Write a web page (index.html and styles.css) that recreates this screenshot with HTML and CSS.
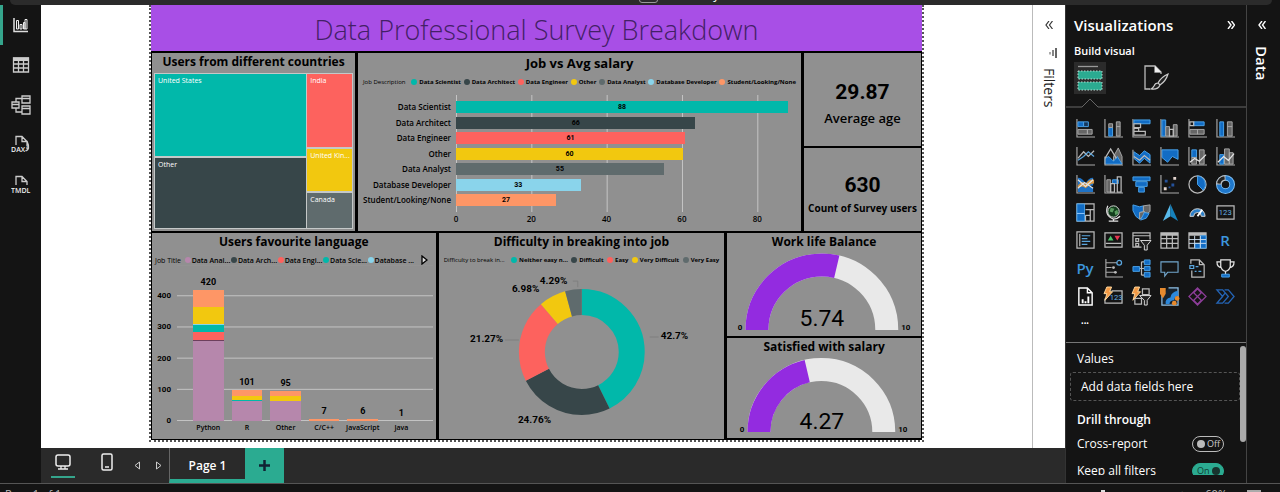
FILE: index.html
```html
<!DOCTYPE html>
<html lang="en">
<head>
<meta charset="utf-8">
<title>Data Professional Survey Breakdown</title>
<link rel="stylesheet" href="styles.css">
</head>
<body>
<header class="topstrip"><div class="topstrip-inner"><span class="searchbox"></span><span class="file-name">Survey</span></div></header>

<div class="workspace">
  <nav class="rail" aria-label="Views">
    <button class="rail-btn active" aria-label="Report view"><svg width="16" height="16" viewBox="0 0 16 16"><path d="M1 1v13.500h14" fill="none" stroke="#ddd" stroke-width="1.500"/><path d="M3.500 3.500h2v8.500h-2zM7 7.500h2V12H7zM10.500 5.500h1.500V12h-1.500zM12 2.500h2V12h-2z" fill="#222" stroke="#eee"/></svg></button>
    <button class="rail-btn" aria-label="Table view"><svg width="18" height="18" viewBox="0 0 18 18"><path d="M1.500 2h15v14h-15zM1.500 8h15M1.500 12h15M6.500 4v12M11.500 4v12" fill="none" stroke="#ccc" stroke-width="1.300"/><path d="M1 1.500h16V5H1z" fill="#ccc"/></svg></button>
    <button class="rail-btn" aria-label="Model view"><svg width="20" height="20" viewBox="0 0 20 20"><path d="M1 7h7v6H1zM11 1h8v7h-8zM11 11h8v8h-8zM1 9.500h7M11 3.500h8M11 13.500h8M5 7V3.500h6M5 13v4h6" fill="none" stroke="#ccc" stroke-width="1.300"/></svg></button>
    <button class="rail-btn" aria-label="DAX query view"><svg width="20" height="20" viewBox="0 0 20 20"><path d="M5 10V1.500h6l5 5V14M11 1.500v5h5M16 6q4 9-2 10" fill="none" stroke="#ccc" stroke-width="1.300"/><text x="0" y="17" class="rail-word">DAX</text></svg></button>
    <button class="rail-btn" aria-label="TMDL view"><svg width="20" height="20" viewBox="0 0 20 20"><path d="M5 10V1.500h6l5 5V10M11 1.500v5h5" fill="none" stroke="#ccc" stroke-width="1.300"/><text x="0" y="18" class="rail-word">TMDL</text></svg></button>
  </nav>

  <div class="center">
    <div class="stage">
      <main class="canvas">
        <article class="report">
          <h1 class="banner">Data Professional Survey Breakdown</h1>
          <div class="row row-top">
            <section class="tile tile-countries">
              <h2>Users from different countries</h2>
              <div class="treemap">
                <div class="tree-col tree-wide">
                  <div class="leaf us">United States</div>
                  <div class="leaf other">Other</div>
                </div>
                <div class="tree-col tree-narrow">
                  <div class="leaf india">India</div>
                  <div class="leaf uk">United Kin...</div>
                  <div class="leaf canada">Canada</div>
                </div>
              </div>
            </section>
            <section class="tile tile-salary">
              <h2>Job vs Avg salary</h2>
              <ul class="legend">
                <li class="legend-title">Job Description</li>
                <li><i class="dot teal"></i>Data Scientist</li><li><i class="dot dark"></i>Data Architect</li><li><i class="dot red"></i>Data Engineer</li><li><i class="dot yellow"></i>Other</li><li><i class="dot slate"></i>Data Analyst</li><li><i class="dot sky"></i>Database Developer</li><li><i class="dot orange"></i>Student/Looking/None</li>
              </ul>
              <div class="hbars">
                <div class="hnames"><span>Data Scientist</span><span>Data Architect</span><span>Data Engineer</span><span>Other</span><span>Data Analyst</span><span>Database Developer</span><span>Student/Looking/None</span></div>
                <div class="hplot">
                  <div class="hbar teal" style="width:98%">88</div>
                  <div class="hbar dark" style="width:70.600%">66</div>
                  <div class="hbar red" style="width:67.500%">61</div>
                  <div class="hbar yellow" style="width:67%">60</div>
                  <div class="hbar slate" style="width:61.300%">55</div>
                  <div class="hbar sky" style="width:36.800%">33</div>
                  <div class="hbar orange" style="width:29.500%">27</div>
                </div>
                <div class="haxis"><span>0</span><span>20</span><span>40</span><span>60</span><span>80</span></div>
              </div>
            </section>
            <div class="stack stack-cards">
              <section class="tile card card-age"><strong>29.87</strong><span class="card-label">Average age</span></section>
              <section class="tile card card-count"><strong>630</strong><span class="card-label small">Count of Survey users</span></section>
            </div>
          </div>

          <div class="row row-bottom">
            <section class="tile tile-language">
              <h2>Users favourite language</h2>
              <ul class="legend legend-wide">
                <li class="legend-title">Job Title</li>
                <li><i class="dot mauve"></i>Data Anal...</li><li><i class="dot dark"></i>Data Arch...</li><li><i class="dot red"></i>Data Engi...</li><li><i class="dot teal"></i>Data Scie...</li><li><i class="dot sky"></i>Database ...</li>
                <li class="legend-next"><button aria-label="More legend items"><svg width="7" height="10" viewBox="0 0 7 10"><path d="M1 1v8l5-4z" fill="#ddd" stroke="#000" stroke-width="1.300"/></svg></button></li>
              </ul>
              <div class="vchart">
                <div class="vaxis"><span>400</span><span>300</span><span>200</span><span>100</span><span>0</span></div>
                <div class="vplot">
                  <div class="vcol"><b>420</b><div class="seg orange" style="height:11.200%"></div><div class="seg yellow" style="height:10.600%"></div><div class="seg sky" style="height:.800%"></div><div class="seg teal" style="height:4.400%"></div><div class="seg red" style="height:5.400%"></div><div class="seg plum" style="height:.800%"></div><div class="seg mauve" style="height:51%"></div></div>
                  <div class="vcol"><b>101</b><div class="seg orange" style="height:4%"></div><div class="seg yellow" style="height:2.800%"></div><div class="seg teal" style="height:.600%"></div><div class="seg mauve" style="height:12.800%"></div></div>
                  <div class="vcol"><b>95</b><div class="seg orange" style="height:2.800%"></div><div class="seg yellow" style="height:3.200%"></div><div class="seg mauve" style="height:13%"></div></div>
                  <div class="vcol"><b>7</b><div class="seg orange" style="height:1.200%"></div></div>
                  <div class="vcol"><b>6</b><div class="seg orange" style="height:1.200%"></div></div>
                  <div class="vcol"><b>1</b></div>
                </div>
                <div class="vnames"><span>Python</span><span>R</span><span>Other</span><span>C/C++</span><span>JavaScript</span><span>Java</span></div>
              </div>
            </section>

            <section class="tile tile-difficulty">
              <h2>Difficulty in breaking into job</h2>
              <ul class="legend">
                <li class="legend-title">Difficulty to break in...</li>
                <li><i class="dot teal"></i>Neither easy n...</li><li><i class="dot dark"></i>Difficult</li><li><i class="dot red"></i>Easy</li><li><i class="dot yellow"></i>Very Difficult</li><li><i class="dot slate"></i>Very Easy</li>
              </ul>
              <svg class="chart" viewBox="0 0 286 170" role="img" aria-label="Difficulty shares">
                <g class="ring" transform="rotate(-90 143 83)">
                  <circle cx="143" cy="83" r="50" pathLength="100" stroke="#01b8aa" stroke-dasharray="42.700 57.300"/>
                  <circle cx="143" cy="83" r="50" pathLength="100" stroke="#374649" stroke-dasharray="24.760 75.240" stroke-dashoffset="-42.700"/>
                  <circle cx="143" cy="83" r="50" pathLength="100" stroke="#fd625e" stroke-dasharray="21.270 78.730" stroke-dashoffset="-67.460"/>
                  <circle cx="143" cy="83" r="50" pathLength="100" stroke="#f2c80f" stroke-dasharray="6.980 93.020" stroke-dashoffset="-88.730"/>
                  <circle cx="143" cy="83" r="50" pathLength="100" stroke="#5f6b6d" stroke-dasharray="4.290 95.710" stroke-dashoffset="-95.710"/>
                </g>
                <path d="M211 68h9M66 71h14M134 12h5v6" fill="none" stroke="#808080"/>
                <g class="share"><text x="222" y="70">42.7%</text><text x="79" y="154">24.76%</text><text x="31" y="73">21.27%</text><text x="73" y="23">6.98%</text><text x="101" y="15">4.29%</text></g>
              </svg>
            </section>

            <div class="stack stack-gauges">
              <section class="tile gauge-work">
                <h2>Work life Balance</h2>
                <svg class="chart" viewBox="0 0 194 85" role="img" aria-label="5.74 of 10">
                  <path class="arc" d="M30 79a65 65 0 0 1 130 0" stroke="#e9e9e9"/>
                  <path class="arc" d="M30 79a65 65 0 0 1 130 0" pathLength="100" stroke="#932be0" stroke-dasharray="57.400 100"/>
                  <text class="gauge-value" x="95" y="75">5.74</text><text class="gauge-end" x="13" y="79">0</text><text class="gauge-end" x="179" y="79">10</text>
                </svg>
              </section>
              <section class="tile gauge-salary">
                <h2>Satisfied with salary</h2>
                <svg class="chart" viewBox="0 0 194 82" role="img" aria-label="4.27 of 10">
                  <path class="arc" d="M32 76a62.500 62.500 0 0 1 125 0" stroke="#e9e9e9"/>
                  <path class="arc" d="M32 76a62.500 62.500 0 0 1 125 0" pathLength="100" stroke="#932be0" stroke-dasharray="42.700 100"/>
                  <text class="gauge-value" x="95" y="73">4.27</text><text class="gauge-end" x="15" y="76">0</text><text class="gauge-end" x="176" y="76">10</text>
                </svg>
              </section>
            </div>
          </div>
        </article>
      </main>

      <aside class="filters">
        <button class="chev" aria-label="Expand filters"><svg width="8" height="8" viewBox="0 0 8 8"><path d="M4 0L1 4l3 4M7.500 0l-3 4 3 4" fill="none" stroke="#333" stroke-width="1.200"/></svg></button>
        <svg class="filter-icon" width="9" height="10" viewBox="0 0 9 10"><path d="M8 0v10" stroke="#333" stroke-width="1.500"/><path d="M5 2v6" stroke="#444" stroke-width="1.300"/><path d="M2 4v2.500" stroke="#555"/></svg>
        <span class="side-word">Filters</span>
      </aside>
    </div>

    <footer class="pages">
      <button class="page-icon selected" aria-label="Desktop layout"><svg width="18" height="18" viewBox="0 0 18 18"><rect x="2" y="2" width="14" height="11" rx="2" fill="none" stroke="#eee" stroke-width="1.500"/><path d="M4 16h10M7 13v3M11 13v3" stroke="#eee" stroke-width="1.300"/></svg></button>
      <button class="page-icon" aria-label="Mobile layout"><svg width="18" height="18" viewBox="0 0 18 18"><rect x="4" y="1" width="10" height="16" rx="1.500" fill="none" stroke="#eee" stroke-width="1.500"/><path d="M7 14h4" stroke="#eee" stroke-width="1.500"/></svg></button>
      <button class="page-arrow" aria-label="Previous page"><svg width="7" height="9" viewBox="0 0 7 9"><path d="M5.500 1v7L1 4.500z" fill="none" stroke="#ccc"/></svg></button>
      <button class="page-arrow" aria-label="Next page"><svg width="7" height="9" viewBox="0 0 7 9"><path d="M1.500 1v7L6 4.500z" fill="none" stroke="#ccc"/></svg></button>
      <button class="page-tab">Page 1</button>
      <button class="page-add" aria-label="New page"><svg width="11" height="11" viewBox="0 0 11 11"><path d="M5.500 0v11M0 5.500h11" stroke="#123" stroke-width="2.500"/></svg></button>
    </footer>
  </div>

  <aside class="viz">
    <div class="viz-head"><h2>Visualizations</h2><button class="chev" aria-label="Collapse"><svg width="8" height="8" viewBox="0 0 8 8"><path d="M1 0l3 4-3 4M4.500 0l3 4-3 4" fill="none" stroke="#fff" stroke-width="1.400"/></svg></button></div>
    <h3>Build visual</h3>
    <div class="viz-tabs">
      <button class="viz-tab on" aria-label="Build visual"><svg width="26" height="26" viewBox="0 0 26 26"><path d="M1 1.500h20" stroke="#999" stroke-width="1.300"/><path d="M1 6h24v8H1zM1 17h24v8H1z" fill="#2bab91"/><path d="M1 6h24v8H1zM1 17h24v8H1z" fill="none" stroke="#b9d8cf" stroke-width="1" stroke-dasharray="1.500 1.500"/></svg></button>
      <button class="viz-tab" aria-label="Format visual"><svg width="26" height="26" viewBox="0 0 26 26"><path d="M7 24H2V1h10l6 6v2M12 1v6h6" fill="none" stroke="#bbb" stroke-width="1.300"/><path d="M12 1v6h6z" fill="#eee"/><path d="M25 9q-7 3-10 9l2 2q6-4 8-11zM15 18q-3 0-4 3-1 2-3 3 7 1 9-4" fill="#222" stroke="#ccc" stroke-width="1.200"/></svg></button>
    </div>
    <svg class="caret-line" viewBox="0 0 180 10"><path d="M0 9h16l8-8 8 8h148" fill="none" stroke="#666"/></svg>

    <div class="visuals">
      <button aria-label="Stacked bar chart"><svg viewBox="0 0 20 20"><path class="ax" d="M1 0v19h19"/><path class="b" d="M2 3h6v5H2z"/><path class="bo" d="M8 3h5v5H8z"/><path class="g" d="M2 11h10v5H2zM12 11h5v5h-5z"/></svg></button>
      <button aria-label="Stacked column chart"><svg viewBox="0 0 20 20"><path class="ax" d="M1 0v19h19"/><path class="b" d="M5 9h4v9H5z"/><path class="g" d="M5 5h4v4H5zM13 3h4v15h-4zM13 8h4"/></svg></button>
      <button aria-label="Clustered bar chart"><svg viewBox="0 0 20 20"><path class="ax" d="M1 0v19h19"/><path class="b" d="M2 1h17v4H2z"/><path class="gl" d="M2 5h7v4H2zM2 10h5v3H2zM2 13h12v4H2z"/></svg></button>
      <button aria-label="Clustered column chart"><svg viewBox="0 0 20 20"><path class="ax" d="M1 0v19h19"/><path class="b" d="M2 1h4v17H2z"/><path class="g" d="M6 8h4v10H6zM14 6h4v12h-4z"/><path class="gl" d="M10 11h4v7h-4z"/></svg></button>
      <button aria-label="100% stacked bar chart"><svg viewBox="0 0 20 20"><path class="ax" d="M1 0v19h19"/><path class="b" d="M6 3h11v4H6z"/><path class="gl" d="M2 3h4v4H2z"/><path class="g" d="M2 11h15v5H2zM10 11v5"/></svg></button>
      <button aria-label="100% stacked column chart"><svg viewBox="0 0 20 20"><path class="ax" d="M1 0v19h19"/><path class="b" d="M4 3h4v15H4z"/><path class="g" d="M12 3h5v15h-5zM12 8h5"/></svg></button>

      <button aria-label="Line chart"><svg viewBox="0 0 20 20"><path class="ax" d="M1 0v19h19"/><path class="gl" d="M2 12l6-7 5 5 6-6"/><path class="bl" d="M2 14l6-4 5-5 6 5"/></svg></button>
      <button aria-label="Area chart"><svg viewBox="0 0 20 20"><path class="g" d="M10 18V10l5-9 4 9v8z"/><path class="b" d="M1 18v-6l4-2 5 5 4-5 5 8z"/><path class="gl" d="M1 12l6-10 6 10"/><path class="ax" d="M1 10v9h19"/></svg></button>
      <button aria-label="Stacked area chart"><svg viewBox="0 0 20 20"><path class="b" d="M2 5l6 4 5-5 6 4v9l-6-5-5 5-6-5z"/><path class="gl" d="M2 10l6 4 5-5 6 5"/><path class="ax" d="M1 3v16h19"/></svg></button>
      <button aria-label="100% stacked area chart"><svg viewBox="0 0 20 20"><path class="b" d="M2 3h17v10l-6-3-5 6-6-5z"/><path class="ax" d="M1 0v19h19"/></svg></button>
      <button aria-label="Line and stacked column chart"><svg viewBox="0 0 20 20"><path class="ax" d="M1 0v19h19"/><path class="b" d="M4 3h5v8H4z"/><path class="g" d="M4 11h5v7H4zM12 3h5v15h-5z"/><path class="wl" d="M2 16l5-4 5 3 7-7"/></svg></button>
      <button aria-label="Line and clustered column chart"><svg viewBox="0 0 20 20"><path class="ax" d="M1 0v19h19"/><path class="b" d="M4 8h4v10H4z"/><path class="g" d="M9 2h5v16H9zM14 6h4v12h-4z"/><path class="wl" d="M2 16l6-6 5 4 6-7"/></svg></button>

      <button aria-label="Ribbon chart"><svg viewBox="0 0 20 20"><path d="M2 3q5 0 8 6 3-6 8-6v8q-5 0-8 5-3-5-8-5z" fill="#1e72c6"/><path d="M2 11q5-6 8-1 3-6 9-5v4q-5 0-9 6-3-4-8-1z" fill="#d9963f"/><path d="M2 14q5-4 8 0 4-4 8 0v4H2z" fill="#1e72c6"/><path class="wl" d="M2 5l8 7 8-7M2 14l7-6 9 6"/><path class="ax" d="M1 0v19h19"/></svg></button>
      <button aria-label="Waterfall chart"><svg viewBox="0 0 20 20"><path class="ax" d="M1 0v19h19"/><path class="g" d="M3 5h4v13H3z"/><path class="b" d="M9 5h6v4H9z"/><path class="gl" d="M7 9h4v9H7zM14 2h4v16h-4z"/></svg></button>
      <button aria-label="Funnel chart"><svg viewBox="0 0 20 20"><path class="b" d="M1 2h18v4H1zM4 7h12v5H4zM7 13h6v5H7z"/></svg></button>
      <button aria-label="Scatter chart"><svg viewBox="0 0 20 20"><path class="ax" d="M1 0v19h19"/><path d="M5 5h3v3H5zM12 9h3v3h-3zM9 12h2v2H9z" fill="#24519b"/><path d="M14 2h3v3h-3zM4 13h3v3H4z" fill="#e4d5cf"/></svg></button>
      <button aria-label="Pie chart"><svg viewBox="0 0 20 20"><circle cx="10" cy="10" r="9" class="gl"/><path class="b" d="M10 1a9 9 0 0 1 6 15l-6-6z"/></svg></button>
      <button aria-label="Donut chart"><svg viewBox="0 0 20 20"><circle cx="10" cy="10" r="7" fill="none" stroke="#7fc0f5" stroke-width="6"/><circle cx="10" cy="10" r="7" fill="none" stroke="#1f78cc" stroke-width="4"/><path d="M3 10a7 7 0 0 1 7-7" fill="none" stroke="#bbb" stroke-width="6"/><path d="M3 9a7 7 0 0 1 6-6" fill="none" stroke="#222" stroke-width="3.500"/></svg></button>

      <button aria-label="Treemap"><svg viewBox="0 0 20 20"><path class="gl" d="M1 1h18v18H1zM10 7h9M10 13h5M15 7v12M10 13v6"/><path class="b" d="M1 1h8v18H1z"/><path d="M1 11h8" stroke="#9cf"/></svg></button>
      <button aria-label="Map"><svg viewBox="0 0 20 20"><circle cx="10" cy="9" r="6" fill="#123d1c" stroke="#ddd"/><path d="M7 5l4 1-2 4-3-1zM11 9l3-2 1 4-3 2z" fill="#5a9c60"/><path class="wl" d="M4 3q-4 10 6 14 4 0 7-3M10 17v2M5 19h10"/></svg></button>
      <button aria-label="Filled map"><svg viewBox="0 0 20 20"><path class="b" d="M1 2l7 2 4-1v6l-4 1v7l-4-3-3-6z"/><path class="g" d="M12 3l7-1v7l-3 2-4-2zM8 10l5-1v4l-5 4z"/><path class="b" d="M13 10l5 1-3 5-6 2z"/></svg></button>
      <button aria-label="Azure map"><svg viewBox="0 0 20 20"><path d="M11 1L3 19l8-5z" fill="#58b9ea"/><path d="M11 1v13l8 5z" fill="#1682bd"/></svg></button>
      <button aria-label="Gauge"><svg viewBox="0 0 20 20"><path d="M2 14a8 8 0 0 1 16 0h-4a4 4 0 0 0-8 0z" fill="#2b7fc8" stroke="#ddd"/><path d="M10 14l5-7" stroke="#fff" stroke-width="2"/></svg></button>
      <button aria-label="Card"><svg viewBox="0 0 20 20"><path class="gl" d="M1 3h18v14H1z"/><text x="3" y="13" class="tiny-blue">123</text></svg></button>

      <button aria-label="Multi-row card"><svg viewBox="0 0 20 20"><path class="gl" d="M1 1h18v17H1z"/><path d="M4 3v13" stroke="#ddd"/><path class="bl" d="M6 5h9M6 8h6M6 11h9M6 14h6"/></svg></button>
      <button aria-label="KPI"><svg viewBox="0 0 20 20"><path class="gl" d="M1 2h18v15H1zM2 13h16"/><path d="M4 10l3-5 3 5z" fill="#4cc46b"/><path d="M11 5h6l-3 5z" fill="#e5384f"/></svg></button>
      <button aria-label="Slicer"><svg viewBox="0 0 20 20"><path class="gl" d="M10 17H1V2h18v7M1 5h18M4 8h3v3H4zM4 13h3v3H4z"/><path d="M9 10h11l-4 5v5h-3v-5z" fill="#222" stroke="#ddd"/></svg></button>
      <button aria-label="Table"><svg viewBox="0 0 20 20"><path class="gl" d="M1 2h18v16H1zM1 8h18M1 13h18M7 4v14M13 4v14"/><path d="M1 2h18v3H1z" fill="#bbb"/></svg></button>
      <button aria-label="Matrix"><svg viewBox="0 0 20 20"><path class="gl" d="M1 2h18v16H1z"/><path d="M1 2h18v3H1z" fill="#bbb"/><path class="b" d="M13 5h6v13h-6zM7 13h6v5H7z"/><path d="M1 9h18M1 13h18M7 5v13M13 5v13" stroke="#cde" fill="none"/></svg></button>
      <button class="word" aria-label="R script visual">R</button>

      <button class="word" aria-label="Python visual">Py</button>
      <button aria-label="Key influencers"><svg viewBox="0 0 20 20"><path class="ax" d="M2 0v19h18M2 4h12M2 9h6M2 14h9"/><circle cx="16" cy="4" r="2.500" class="bl"/><circle cx="10" cy="9" r="1.500" fill="#bbb"/><circle cx="12" cy="14" r="1.500" fill="#bbb"/></svg></button>
      <button aria-label="Decomposition tree"><svg viewBox="0 0 20 20"><path class="gl" d="M7 10h6M10 3v14M10 3h3M10 17h3"/><path class="b" d="M1 8h7v5H1zM13 1h6v5h-6zM13 8h6v4h-6zM13 14h6v5h-6z"/></svg></button>
      <button aria-label="Q and A"><svg viewBox="0 0 20 20"><path d="M1 3h18v11H8l-3 4v-4H1z" fill="none" stroke="#72a7cd" stroke-width="1.200"/></svg></button>
      <button aria-label="Smart narrative"><svg viewBox="0 0 20 20"><path class="gl" d="M3 5V1h9l5 5v13H4v-7M12 1v5h5"/><path class="bl" d="M2 7h4v3H2zM8 8h3M7 13h2M11 13h3"/></svg></button>
      <button aria-label="Metrics"><svg viewBox="0 0 20 20"><path class="wl" d="M5 1h10v7q-1 4-5 5-4-1-5-5zM5 3H1q0 6 5 6M15 3h4q0 6-5 6M10 13v3"/><path class="b" d="M6 16h8v3H6z"/></svg></button>

      <button aria-label="Paginated report"><svg viewBox="0 0 20 20"><path d="M3 1h9l5 5v13H3zM12 1v5h5" fill="none" stroke="#fff" stroke-width="1.500"/><path d="M6 13h2v4H6zM9 15h2v2H9zM12 10h2v7h-2z" fill="#fff"/></svg></button>
      <button aria-label="New card"><svg viewBox="0 0 20 20"><path class="gl" d="M8 4h11v13H1v-5"/><text x="6" y="14" class="tiny-blue">123</text><path class="bolt" d="M3 0h5L6 5h3L1 14l2-7H0z"/></svg></button>
      <button aria-label="New slicer"><svg viewBox="0 0 20 20"><path class="gl" d="M11 2h7v6h-7zM3 12h7v6H3z"/><path d="M8 9h12l-4 5v5h-3v-5z" fill="#222" stroke="#ddd"/><path class="bolt" d="M3 0h5L6 5h3L1 14l2-7H0z"/></svg></button>
      <button aria-label="ArcGIS map"><svg viewBox="0 0 20 20"><path d="M2 9v10h17V1H9" fill="#17232f" stroke="#8fc1e8" stroke-width="1.300"/><path d="M6 18q-1-6 5-7 1-6 8-7v5q-4 1-4 5-5 0-5 4z" fill="#2b88dc"/><path d="M0 1h6v6l-3 5-3-5z" fill="#e68a2e"/><circle cx="18" cy="12" r="2.500" fill="#e68a2e"/><circle cx="15" cy="17" r="2.500" fill="#e68a2e"/></svg></button>
      <button aria-label="Power Apps"><svg viewBox="0 0 20 20"><path d="M10 1l9 9-9 9-9-9zM6 6l8 8M14 6l-8 8M10 2l4 4-4 4-4-4zM10 10l4 4-4 4-4-4z" fill="none" stroke="#8c3d98" stroke-width="1.300"/></svg></button>
      <button aria-label="Power Automate"><svg viewBox="0 0 20 20"><path d="M1 3h6l6 7-6 7H1l6-7zM9 3h4l6 7-6 7H9M10 6l-8 10" fill="none" stroke="#2464b5" stroke-width="1.400"/></svg></button>
      <button class="more" aria-label="Get more visuals">•••</button>
    </div>

    <div class="wells">
      <div class="wells-body">
        <p>Values</p>
        <button class="drop">Add data fields here</button>
        <h3>Drill through</h3>
        <div class="option"><label for="cross">Cross-report</label><span class="switch"><input id="cross" type="checkbox" role="switch"><span>Off</span></span></div>
        <div class="option"><label for="keep">Keep all filters</label><span class="switch"><input id="keep" type="checkbox" role="switch" checked><span>On</span></span></div>
      </div>
      <div class="scroll"><div class="thumb"></div></div>
    </div>
  </aside>

  <aside class="data">
    <button class="chev" aria-label="Expand data"><svg width="8" height="8" viewBox="0 0 8 8"><path d="M4 0L1 4l3 4M7.500 0l-3 4 3 4" fill="none" stroke="#fff" stroke-width="1.400"/></svg></button>
    <span class="side-word">Data</span>
  </aside>
</div>

<footer class="status"><span>Page 1 of 1</span><span class="status-right"><i class="zoom-thumb"></i><span>+</span><span>60%</span><i class="fit"></i></span></footer>
</body>
</html>
```
FILE: styles.css
```css
* { box-sizing: border-box; }
body {
  margin: 0;
  height: 100vh;
  display: flex;
  flex-direction: column;
  overflow: hidden;
  background: #141414;
  color: #fff;
  font-family: "Open Sans", "Noto Sans", sans-serif;
}
h1, h2, h3, p, ul { margin: 0; padding: 0; }
ul { list-style: none; }
svg { display: block; }
button { padding: 0; border: 0; background: none; color: inherit; font: inherit; }

.topstrip { height: 5px; flex: none; padding: 0 8px 0 10px; }
.topstrip-inner {
  height: 100%;
  display: flex;
  justify-content: center;
  align-items: flex-end;
  gap: 24px;
  padding-left: 76px;
  overflow: hidden;
  background: #2b2b2b;
  border-radius: 0 0 6px 6px;
}
.searchbox { width: 19px; height: 12px; margin-bottom: 2px; border: 1px solid #999; border-radius: 3px; }
.file-name { font-size: 12px; line-height: 14px; margin-bottom: 3px; }

.workspace { flex: 1; min-height: 0; display: flex; }

.rail { width: 41px; flex: none; display: flex; flex-direction: column; }
.rail-btn { height: 40px; display: grid; place-items: center; }
.rail-btn.active { border-left: 3px solid #35a58c; padding-right: 3px; }
.rail-word { font: 600 7px "Open Sans", sans-serif; fill: #eee; stroke: #141414; stroke-width: 2px; paint-order: stroke; }

.center { flex: 1; min-width: 0; display: flex; flex-direction: column; }
.stage { flex: 1; min-height: 0; display: flex; background: #fff; }
.canvas { flex: 1; display: flex; justify-content: center; padding-bottom: 6px; }

.report {
  width: 78.200%;
  display: flex;
  flex-direction: column;
  gap: 2px;
  color: #000;
  background: #000 padding-box;
  border: 2px dotted #555;
  border-top: 0;
}
.banner {
  height: 46px;
  flex: none;
  background: #a84fe6;
  color: #432066;
  font-size: 27px;
  font-weight: 300;
  line-height: 50px;
  text-align: center;
  white-space: nowrap;
}
.row { display: flex; gap: 3px; min-height: 0; padding: 0 1px; }
.row-top { flex: 178 1 0; }
.row-bottom { flex: 206 1 0; padding-bottom: 1px; }
.tile { background: #909090; min-width: 0; min-height: 0; display: flex; flex-direction: column; overflow: hidden; }
.tile h2 { flex: none; font-size: 12px; line-height: 18px; font-weight: 700; text-align: center; white-space: nowrap; }
.tile-countries { flex: 203 1 0; }
.tile-salary { flex: 443 1 0; }
.tile-salary h2 { font-size: 13px; line-height: 20px; }
.stack { display: flex; flex-direction: column; gap: 2px; }
.stack-cards { flex: 117 1 0; }
.tile-language { flex: 284 1 0; }
.tile-difficulty { flex: 286 1 0; }
.stack-gauges { flex: 194 1 0; }

.treemap { flex: 1; display: flex; gap: 1px; margin: 2px; padding: 1px; background: #c4c8c8; }
.tree-col { display: flex; flex-direction: column; gap: 2px; min-width: 0; }
.tree-wide { flex: 152 1 0; }
.tree-narrow { flex: 45 1 0; }
.leaf { padding: 2px 3px; color: #fff; font-size: 7px; font-weight: 400; line-height: 10px; white-space: nowrap; }
.us { flex: 83 1 0; background: #01b8aa; }
.other { flex: 71 1 0; background: #374649; }
.india { flex: 77 1 0; background: #fd625e; }
.uk { flex: 42 1 0; background: #f2c80f; }
.canada { flex: 34 1 0; background: #5f6b6d; }

.teal { background: #01b8aa; }
.dark { background: #374649; }
.red { background: #fd625e; }
.yellow { background: #f2c80f; }
.slate { background: #5f6b6d; }
.sky { background: #8ad4eb; }
.orange { background: #fe9666; }
.mauve { background: #b687ac; }
.plum { background: #6d3f5d; }

.legend { flex: none; display: flex; align-items: center; justify-content: space-between; padding: 0 5px; height: 18px; font-size: 6px; font-weight: 700; white-space: nowrap; }
.legend li { display: flex; align-items: center; gap: 2px; }
.legend .legend-title { font-weight: 400; padding-right: 3px; }
.legend-wide { font-size: 7px; font-weight: 600; padding: 0 8px 0 3px; }
.legend-wide li { gap: 1px; }
.legend-wide .legend-next { padding-left: 6px; }
.dot { width: 6px; height: 6px; border-radius: 50%; }

.hbars { flex: 1; display: grid; grid-template-columns: 90px 1fr; grid-template-rows: 1fr auto; column-gap: 5px; padding: 4px 6px 5px 3px; }
.hnames, .hplot { display: flex; flex-direction: column; justify-content: space-between; padding: 6px 0 6px; }
.hnames { text-align: right; font-size: 8px; font-weight: 600; white-space: nowrap; align-items: flex-end; }
.hnames span { line-height: 12px; }
.hplot { background: linear-gradient(90deg, #c4c4c4 1px, transparent 1px) 0 0 / 22.222% 100%; }
.hbar { height: 12px; font: 700 7px/12px Roboto, sans-serif; text-align: center; }
.haxis { grid-column: 2; display: flex; font-size: 8px; font-weight: 600; line-height: 14px; }
.haxis span { flex: none; width: 22.222%; text-align: center; }
.haxis span:first-child { margin-left: -11.111%; }

.card { align-items: center; justify-content: center; white-space: nowrap; }
.card-age { flex: 93 1 0; padding-top: 10px; }
.card-count { flex: 82 1 0; padding-top: 10px; }
.card strong { font: 700 21px/28px Roboto, sans-serif; }
.card-label { font-size: 13px; font-weight: 600; line-height: 24px; }
.card-label.small { font-size: 10px; line-height: 18px; font-weight: 700; }

.vchart { flex: 1; min-height: 0; margin-top: -4px; display: grid; grid-template-columns: 18px 1fr; grid-template-rows: 1fr 17px; column-gap: 6px; padding: 0 3px 1px 1px; }
.vaxis { display: grid; grid-template-rows: repeat(5, 1fr); padding-top: 6px; margin-bottom: -6px; text-align: right; font: 700 8px/12px Roboto, sans-serif; }
.vaxis span { align-self: end; }
.vplot { display: flex; align-items: stretch; padding: 0 12px 0 12px; background: linear-gradient(0deg, #c4c4c4 1px, transparent 1px) 0 100% / 100% 20%; }
.vcol { flex: 1; display: flex; flex-direction: column; justify-content: flex-end; padding: 0 4px; }
.vcol b { flex: none; text-align: center; font: 700 9px/15px Roboto, sans-serif; }
.seg { flex: none; }
.vnames { grid-column: 2; display: flex; padding: 0 12px; font-size: 7px; font-weight: 600; line-height: 14px; }
.vnames span { flex: 1 0 0; min-width: 0; display: flex; justify-content: center; }

.chart { flex: 1; min-height: 0; width: 100%; }
.ring circle { fill: none; stroke-width: 26px; }
.share text { font: 700 10px Roboto, sans-serif; }
.arc { fill: none; stroke-width: 23px; }
.gauge-value { font: 400 23px Roboto, sans-serif; text-anchor: middle; }
.gauge-end { font: 700 8px Roboto, sans-serif; text-anchor: middle; }

.chev { width: 16px; height: 16px; display: grid; place-items: center; }
.side-word { writing-mode: vertical-rl; font-size: 14px; line-height: 20px; }
.filters { width: 33px; flex: none; display: flex; flex-direction: column; align-items: center; padding-top: 12px; color: #222; border-left: 1px solid #bbb; }
.filter-icon { margin: 15px 0 10px 6px; }

.pages { height: 35px; flex: none; display: flex; background: #2a2a2a; padding-left: 10px; }
.page-icon { width: 24px; margin-right: 20px; padding-top: 5px; display: flex; flex-direction: column; align-items: center; gap: 5px; }
.page-icon.selected::after { content: ""; width: 100%; height: 2px; background: #35a58c; }
.page-arrow { width: 21px; display: grid; place-items: center; }
.page-icon + .page-arrow { margin-left: -12px; }
.page-tab { width: 76px; padding-top: 4px; border-left: 1px solid #666; border-bottom: 4px solid #2bab91; font-size: 12px; font-weight: 600; }
.page-add { width: 39px; background: #2bab91; display: grid; place-items: center; }

.viz { width: 181px; flex: none; display: flex; flex-direction: column; border-left: 1px solid #333; }
.viz-head { display: flex; align-items: center; justify-content: space-between; padding: 9px 7px 0 8px; }
.viz h2 { font-size: 15px; line-height: 22px; font-weight: 600; }
.viz h3 { font-size: 11px; line-height: 18px; font-weight: 600; }
.viz > h3 { padding: 6px 8px 0; }
.viz-tabs { display: flex; gap: 34px; padding: 2px 8px 0; }
.viz-tab { width: 32px; height: 32px; display: grid; place-items: center; }
.viz-tab.on { background: #2b2b2b; }
.caret-line { width: 100%; margin-top: 4px; flex: none; }
.visuals { display: grid; grid-template-columns: repeat(6, 28px); grid-auto-rows: 28px; padding: 6px 0 0 5px; flex: none; }
.visuals button { display: grid; place-items: center; }
.visuals svg { width: 19px; height: 19px; overflow: visible; }
.visuals .word { color: #3d96dd; font-size: 15px; font-weight: 600; line-height: 20px; }
.visuals .more { font-size: 7px; line-height: 10px; height: 28px; }
.ax { fill: none; stroke: #aaa; stroke-width: 1.200px; }
.b { fill: #126cc4; stroke: #4ba3ea; }
.bo { fill: #16375c; stroke: #4ba3ea; }
.bl { fill: none; stroke: #5aa5dd; stroke-width: 1.300px; }
.g { fill: #666; stroke: #aaa; }
.gl { fill: none; stroke: #bbb; stroke-width: 1.300px; }
.wl { fill: none; stroke: #e4e4e4; stroke-width: 1.300px; }
.bolt { fill: #f39a45; stroke: #ffd9a0; stroke-width: 1px; }
.tiny-blue { font: 400 8px Roboto, sans-serif; fill: #65aee0; }

.wells { flex: 1; min-height: 0; display: flex; margin-top: 4px; border-top: 1px solid #777; font-size: 12px; }
.wells-body { flex: 1; min-width: 0; overflow: hidden; padding: 7px 0 0 4px; margin-bottom: 8px; }
.wells p { padding-left: 7px; line-height: 18px; }
.drop { width: 100%; height: 29px; margin-top: 4px; padding-left: 10px; border: 1px dashed #555; border-radius: 3px; text-align: left; }
.wells h3 { padding: 9px 7px 0; font-size: 12px; line-height: 20px; }
.option { display: flex; justify-content: space-between; align-items: center; padding: 0 16px 0 7px; height: 27px; }
.switch { position: relative; display: flex; width: 32px; height: 16px; }
.switch input { appearance: none; margin: 0; width: 100%; height: 100%; border: 1px solid #bbb; border-radius: 8px; }
.switch input:checked { background: #2bab91; border-color: #2bab91; }
.switch input::before { content: ""; display: block; width: 8px; height: 8px; margin: 3px 4px; border-radius: 50%; background: #bbb; }
.switch input:checked::before { margin-left: 19px; background: #17342e; }
.switch span { position: absolute; right: 4px; top: 0; font-size: 9px; line-height: 16px; color: #ccc; pointer-events: none; }
.switch input:checked + span { right: auto; left: 5px; color: #123d33; }
.scroll { width: 6px; flex: none; padding-top: 3px; }
.thumb { height: 70%; border-radius: 3px; background: #aaa; }

.data { width: 34px; flex: none; display: flex; flex-direction: column; align-items: center; gap: 13px; padding: 12px 4px 0 0; border-left: 1px solid #444; }
.data .side-word { font-size: 15px; font-weight: 600; }

.status { height: 9px; flex: none; display: flex; justify-content: space-between; overflow: hidden; border-top: 1px solid #555; padding: 2px 19px 0 5px; font-size: 11px; line-height: 16px; color: #bbb; }
.status-right { display: flex; gap: 20px; }
.zoom-thumb { width: 4px; height: 12px; margin: 4px 54px 0 0; background: #ddd; }
.fit { width: 14px; height: 10px; margin-top: 4px; background: #aaa; }
```
